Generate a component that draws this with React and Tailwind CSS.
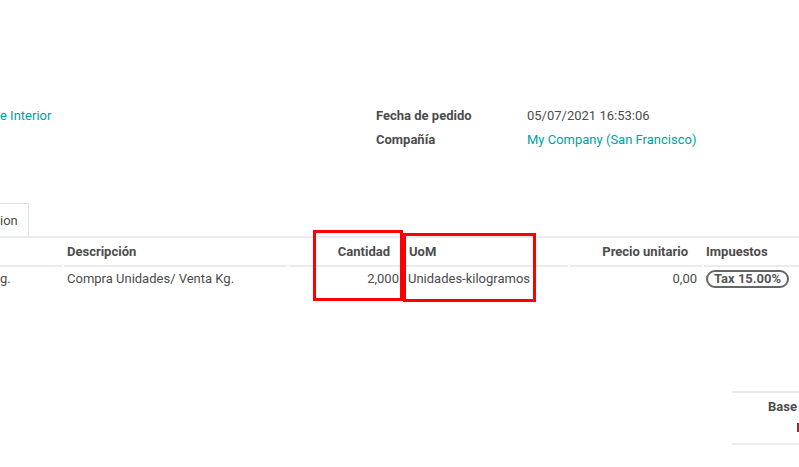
export default function App() {
  return (
    <div className="relative h-[467px] w-[799px] overflow-hidden bg-white font-['Roboto',sans-serif] text-[13px] text-[#4c4c4c]">
      {/* header fields */}
      <div className="flex pt-[104px] leading-6">
        <div className="w-[376px] text-[#00a09d]">e Interior</div>
        <div className="grid grid-cols-[151px_1fr]">
          <span className="font-bold">Fecha de pedido</span>
          <span>05/07/2021 16:53:06</span>
          <span className="font-bold">Compañía</span>
          <span className="text-[#00a09d]">My Company (San Francisco)</span>
        </div>
      </div>

      {/* tab */}
      <div className="mt-[51px] flex">
        <div className="h-[33px] w-[29px] border-t border-r border-[#dee2e6] pt-[8px] leading-[17px]">ion</div>
      </div>

      {/* lines table */}
      <div className="border-t-2 border-[#e9ecef]">
        <div className="flex h-[29px] items-center font-bold">
          <div className="h-full w-[62px] border-b-2 border-[#e9ecef]" />
          <div className="ml-[2px] flex h-full w-[223px] items-center border-b-2 border-[#e9ecef] pl-[3px]">Descripción</div>
          <div className="ml-[2px] flex h-full w-[113px] items-center justify-end border-b-2 border-[#e9ecef] pr-[12px]">Cantidad</div>
          <div className="flex h-full w-[166px] items-center border-b-2 border-[#e9ecef] pl-[7px]">UoM</div>
          <div className="ml-[2px] flex h-full w-[132px] items-center justify-end border-b-2 border-[#e9ecef] pr-[14px]">Precio unitario</div>
          <div className="ml-[2px] flex h-full flex-1 items-center border-b-2 border-[#e9ecef] pl-[2px]">Impuestos</div>
        </div>
        <div className="flex h-[24px] items-center">
          <div className="w-[62px]">g.</div>
          <div className="ml-[2px] w-[223px] pl-[3px]">Compra Unidades/ Venta Kg.</div>
          <div className="ml-[2px] w-[113px] pr-[3px] text-right">2,000</div>
          <div className="w-[166px] pl-[6px]">Unidades-kilogramos</div>
          <div className="ml-[2px] w-[132px] pr-[5px] text-right">0,00</div>
          <div className="ml-[2px] flex-1 pl-[2px]">
            <span className="inline-flex h-[18px] items-center rounded-full border-2 border-[#666] px-[6px] text-[13px] font-bold leading-none text-[#555]">
              Tax 15.00%
            </span>
          </div>
        </div>
      </div>

      {/* totals */}
      <div className="ml-[732px] mt-[100px] h-[54px] border-y-2 border-[#e9ecef]">
        <div className="flex h-[28px] items-center pl-[36px] font-bold">Base</div>
        <div className="flex justify-end pt-[2px]">
          <div className="h-[9px] w-[2px] bg-[#8b3030]" />
        </div>
      </div>

      {/* annotation boxes */}
      <div className="absolute left-[313px] top-[230px] h-[71px] w-[90px] border-[3px] border-[#ff0000]" />
      <div className="absolute left-[403px] top-[233px] h-[69px] w-[133px] border-[3px] border-[#ff0000]" />
    </div>
  );
}
